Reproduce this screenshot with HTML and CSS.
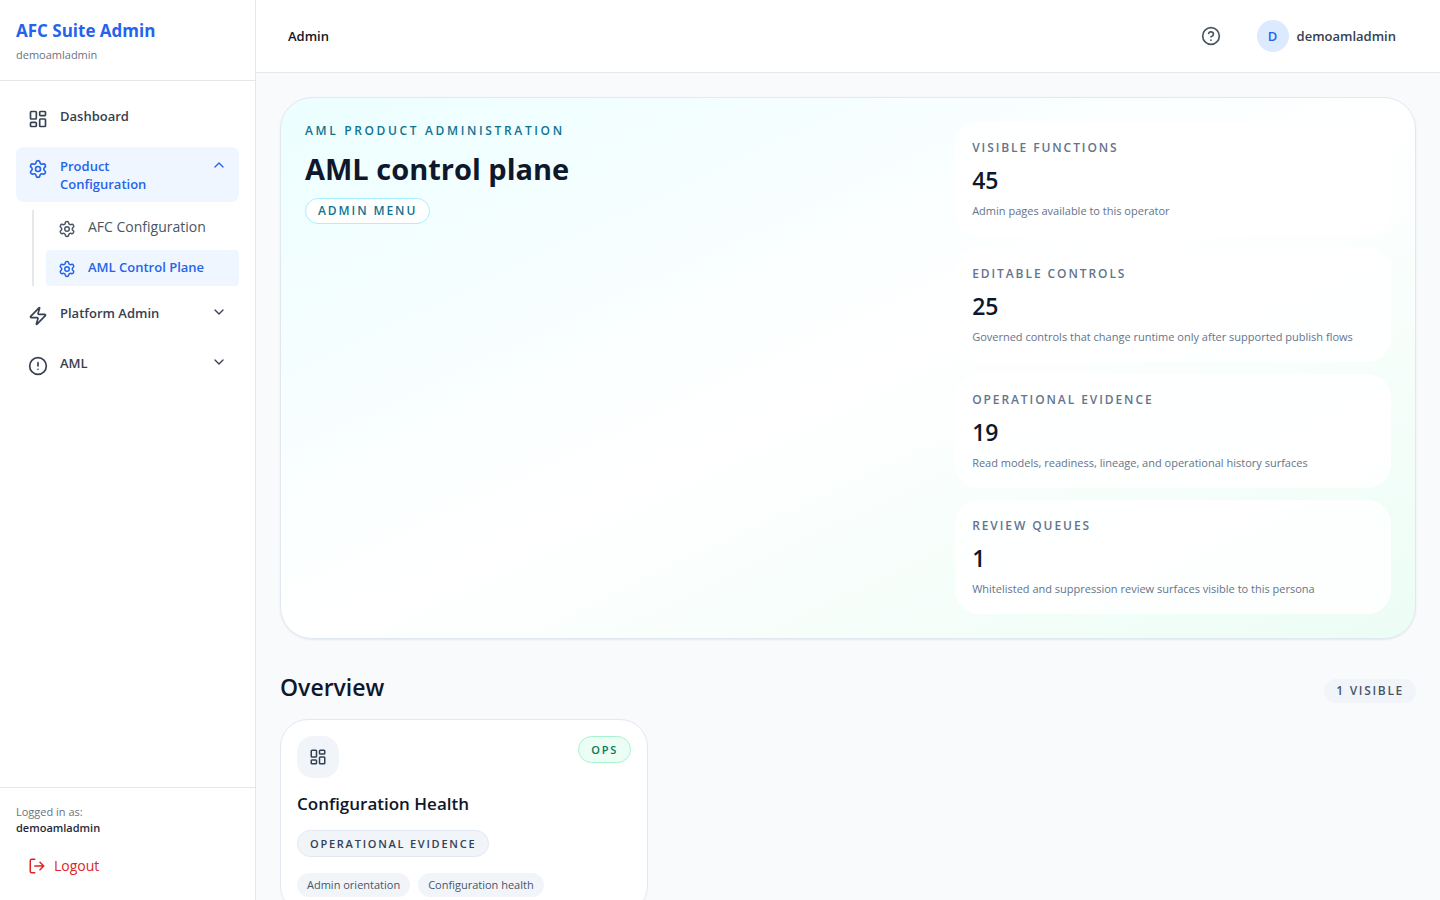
FILE: index.html
```html
<!DOCTYPE html>
<html lang="en">
<head>
<meta charset="utf-8">
<meta name="viewport" content="width=device-width, initial-scale=1">
<title>AFC Suite Admin</title>
<link rel="stylesheet" href="styles.css">
</head>
<body>
<svg class="sprite" aria-hidden="true">
  <symbol id="grid" viewBox="0 0 24 24"><rect x="3" y="3" width="7" height="9" rx="1"/><rect x="14" y="3" width="7" height="5" rx="1"/><rect x="14" y="12" width="7" height="9" rx="1"/><rect x="3" y="16" width="7" height="5" rx="1"/></symbol>
  <symbol id="gear" viewBox="0 0 24 24"><path d="M9.671 4.136a2.34 2.34 0 0 1 4.659 0 2.34 2.34 0 0 0 3.319 1.915 2.34 2.34 0 0 1 2.33 4.033 2.34 2.34 0 0 0 0 3.831 2.34 2.34 0 0 1-2.33 4.033 2.34 2.34 0 0 0-3.319 1.915 2.34 2.34 0 0 1-4.659 0 2.34 2.34 0 0 0-3.32-1.915 2.34 2.34 0 0 1-2.33-4.033 2.34 2.34 0 0 0 0-3.831A2.34 2.34 0 0 1 6.35 6.051a2.34 2.34 0 0 0 3.319-1.915"/><circle cx="12" cy="12" r="3"/></symbol>
  <symbol id="bolt" viewBox="0 0 24 24"><path d="M4 14a1 1 0 0 1-.78-1.63l9.9-10.2a.5.5 0 0 1 .86.46l-1.92 6.02A1 1 0 0 0 13 10h7a1 1 0 0 1 .78 1.63l-9.9 10.2a.5.5 0 0 1-.86-.46l1.92-6.02A1 1 0 0 0 11 14z"/></symbol>
  <symbol id="alert" viewBox="0 0 24 24"><circle cx="12" cy="12" r="10"/><path d="M12 8v4M12 16h.01"/></symbol>
  <symbol id="help" viewBox="0 0 24 24"><circle cx="12" cy="12" r="10"/><path d="M9.09 9a3 3 0 0 1 5.83 1c0 2-3 3-3 3M12 17h.01"/></symbol>
  <symbol id="down" viewBox="0 0 24 24"><path d="m6 9 6 6 6-6"/></symbol>
  <symbol id="up" viewBox="0 0 24 24"><path d="m18 15-6-6-6 6"/></symbol>
  <symbol id="logout" viewBox="0 0 24 24"><path d="M9 21H5a2 2 0 0 1-2-2V5a2 2 0 0 1 2-2h4M16 17l5-5-5-5M21 12H9"/></symbol>
</svg>
<div class="app">
  <aside class="sidebar">
    <div class="brand">
      <div class="brand-name">AFC Suite Admin</div>
      <div class="brand-user">demoamladmin</div>
    </div>
    <nav class="nav">
      <a class="nav-item" href="#"><svg class="icon icon-md"><use href="#grid"/></svg><span class="nav-label">Dashboard</span></a>
      <button class="nav-item active" type="button" aria-expanded="true"><svg class="icon icon-md"><use href="#gear"/></svg><span class="nav-label">Product Configuration</span><svg class="icon chevron"><use href="#up"/></svg></button>
      <div class="subnav">
        <a class="sub-item" href="#"><svg class="icon icon-sm"><use href="#gear"/></svg><span>AFC Configuration</span></a>
        <a class="sub-item active" href="#" aria-current="page"><svg class="icon icon-sm"><use href="#gear"/></svg><span>AML Control Plane</span></a>
      </div>
      <button class="nav-item" type="button" aria-expanded="false"><svg class="icon icon-md"><use href="#bolt"/></svg><span class="nav-label">Platform Admin</span><svg class="icon chevron"><use href="#down"/></svg></button>
      <button class="nav-item" type="button" aria-expanded="false"><svg class="icon icon-md"><use href="#alert"/></svg><span class="nav-label">AML</span><svg class="icon chevron"><use href="#down"/></svg></button>
    </nav>
    <div class="session">
      <div class="session-label">Logged in as:</div>
      <div class="session-user">demoamladmin</div>
      <button class="logout" type="button"><svg class="icon icon-sm"><use href="#logout"/></svg>Logout</button>
    </div>
  </aside>
  <div class="page">
    <header class="topbar">
      <div class="topbar-title">Admin</div>
      <div class="topbar-actions">
        <button class="help" type="button" aria-label="Help"><svg class="icon icon-md"><use href="#help"/></svg></button>
        <button class="account" type="button"><span class="avatar">D</span><span>demoamladmin</span></button>
      </div>
    </header>
    <main class="content">
      <section class="hero">
        <div class="hero-intro">
          <p class="eyebrow">AML PRODUCT ADMINISTRATION</p>
          <h1 class="hero-title">AML control plane</h1>
          <span class="menu-badge">ADMIN MENU</span>
        </div>
        <div class="stats">
          <div class="stat"><div class="stat-label">VISIBLE FUNCTIONS</div><div class="stat-value">45</div><div class="stat-note">Admin pages available to this operator</div></div>
          <div class="stat"><div class="stat-label">EDITABLE CONTROLS</div><div class="stat-value">25</div><div class="stat-note">Governed controls that change runtime only after supported publish flows</div></div>
          <div class="stat"><div class="stat-label">OPERATIONAL EVIDENCE</div><div class="stat-value">19</div><div class="stat-note">Read models, readiness, lineage, and operational history surfaces</div></div>
          <div class="stat"><div class="stat-label">REVIEW QUEUES</div><div class="stat-value">1</div><div class="stat-note">Whitelisted and suppression review surfaces visible to this persona</div></div>
        </div>
      </section>
      <section class="overview">
        <div class="section-head">
          <h2 class="section-title">Overview</h2>
          <span class="count">1 VISIBLE</span>
        </div>
        <div class="cards">
          <article class="card">
            <div class="card-top">
              <span class="card-icon"><svg class="icon icon-sm"><use href="#grid"/></svg></span>
              <span class="badge badge-ops">OPS</span>
            </div>
            <h3 class="card-title">Configuration Health</h3>
            <span class="badge">OPERATIONAL EVIDENCE</span>
            <div class="tags"><span class="tag">Admin orientation</span><span class="tag">Configuration health</span></div>
          </article>
        </div>
      </section>
    </main>
  </div>
</div>
</body>
</html>
```

FILE: styles.css
```css
* { box-sizing: border-box; }
body { margin: 0; font-family: "Segoe UI", "Open Sans", "Noto Sans", sans-serif; font-size: 14px; color: #0f172a; background: #f8fafc; }
h1, h2, h3, p { margin: 0; }
button { font: inherit; color: inherit; border: 0; background: none; cursor: pointer; text-align: left; }
a { color: inherit; text-decoration: none; }
.sprite { display: none; }
.icon { flex: none; display: block; fill: none; stroke: currentColor; stroke-width: 2; stroke-linecap: round; stroke-linejoin: round; width: 16px; height: 16px; }
.icon-md { width: 20px; height: 20px; }
.icon-sm { width: 18px; height: 18px; }

.app { display: flex; height: 100vh; overflow: hidden; }
.sidebar { flex: none; width: 256px; display: flex; flex-direction: column; background: #fff; border-right: 1px solid #e5e7eb; }
.brand { padding: 16px; border-bottom: 1px solid #e5e7eb; }
.brand-name { font-size: 17px; line-height: 30px; font-weight: 700; color: #2563eb; }
.brand-user { font-size: 11px; line-height: 18px; color: #6b7280; }

.nav { flex: 1; padding: 16px; display: flex; flex-direction: column; gap: 8px; overflow: auto; }
.nav-item { display: flex; align-items: flex-start; gap: 12px; width: 100%; min-height: 42px; padding: 10px 12px 9px; border-radius: 8px; line-height: 18px; font-size: 13px; font-weight: 600; color: #374151; }
.nav-item .icon-md { margin-top: 2px; }
.nav-label { flex: 1; }
.nav-item.active, .sub-item.active { background: #eff6ff; color: #2563eb; }
.subnav { margin-left: 16px; padding-left: 12px; border-left: 2px solid #e5e7eb; display: flex; flex-direction: column; gap: 4px; }
.sub-item { display: flex; align-items: flex-start; gap: 12px; padding: 8px 12px; border-radius: 4px; line-height: 18px; color: #4b5563; }
.sub-item .icon { margin-top: 2px; }
.sub-item.active { font-size: 13px; font-weight: 600; }

.brand, .session { flex: none; }
.brand { padding-bottom: 16px; }
.session { padding: 16px; border-top: 1px solid #e5e7eb; font-size: 11px; line-height: 16px; }
.session-label { color: #6b7280; }
.session-user { font-weight: 600; color: #1f2937; }
.logout { display: flex; align-items: center; gap: 8px; width: 100%; margin-top: 12px; padding: 8px 12px; font-size: 14px; line-height: 20px; color: #dc2626; }

.page { flex: 1; min-width: 0; display: flex; flex-direction: column; }
.topbar { flex: none; display: flex; align-items: center; justify-content: space-between; padding: 12px 32px; background: #fff; border-bottom: 1px solid #e5e7eb; font-size: 13px; font-weight: 600; }
.topbar-title { color: #111827; }
.topbar-actions { display: flex; align-items: center; gap: 16px; }
.help { padding: 8px; color: #4b5563; }
.account { display: flex; align-items: center; gap: 8px; padding: 8px 12px; color: #374151; }
.avatar { display: flex; align-items: center; justify-content: center; width: 32px; height: 32px; border-radius: 50%; background: #dbeafe; color: #2563eb; }
.content { flex: 1; overflow: auto; scrollbar-width: none; padding: 24px; display: flex; flex-direction: column; gap: 32px; }

.hero { flex: none; display: grid; grid-template-columns: 1.4fr 1fr; gap: 40px; padding: 24px; border: 1px solid #e2e8f0; border-radius: 32px; background: linear-gradient(to bottom right, #ecfeff, #fff 50%, #ecfdf5); box-shadow: 0 1px 2px rgba(15, 23, 42, .08); }
.eyebrow { font-size: 12px; line-height: 18px; font-weight: 600; letter-spacing: .22em; color: #0e7490; }
.hero-title { margin: 11px 0; font-size: 29px; line-height: 36px; font-weight: 700; }
.menu-badge { display: inline-block; padding: 4px 12px; border: 1px solid #a5f3fc; border-radius: 999px; background: #fff; font-size: 12px; line-height: 16px; font-weight: 600; letter-spacing: .16em; color: #0e7490; }
.stats { display: grid; gap: 12px; }
.stat { padding: 16px; border: 1px solid rgba(255, 255, 255, .7); border-radius: 24px; background: rgba(255, 255, 255, .85); display: flex; flex-direction: column; gap: 7px; color: #64748b; font-size: 11px; line-height: 16px; }
.stat-label { font-size: 12px; line-height: 18px; font-weight: 600; letter-spacing: .16em; }
.stat-value { font-size: 23px; line-height: 32px; font-weight: 600; color: #0f172a; }

.section-head { display: flex; align-items: flex-end; justify-content: space-between; margin-bottom: 16px; }
.section-title { font-size: 23px; line-height: 32px; font-weight: 600; }
.count { padding: 4px 12px; border-radius: 999px; background: #f1f5f9; font-size: 12px; line-height: 16px; font-weight: 600; letter-spacing: .14em; color: #475569; }
.cards { display: grid; grid-template-columns: repeat(3, 1fr); gap: 16px; }
.card { padding: 16px; border: 1px solid #e2e8f0; border-radius: 28px; background: #fff; }
.card-top { display: flex; align-items: flex-start; justify-content: space-between; }
.card-icon { padding: 12px; border-radius: 16px; background: #f1f5f9; color: #334155; }
.card-title { margin: 12px 0; font-size: 17px; line-height: 28px; font-weight: 600; }
.badge { display: inline-block; padding: 4px 12px; border: 1px solid #e2e8f0; border-radius: 999px; background: #f1f5f9; font-size: 11px; line-height: 17px; font-weight: 600; letter-spacing: .16em; color: #334155; }
.badge-ops { border-color: #a7f3d0; background: #ecfdf5; color: #047857; }
.tags { display: flex; flex-wrap: wrap; gap: 8px; margin-top: 16px; }
.tag { padding: 4px 10px; border-radius: 999px; background: #f1f5f9; font-size: 11px; line-height: 16px; color: #475569; }
```
